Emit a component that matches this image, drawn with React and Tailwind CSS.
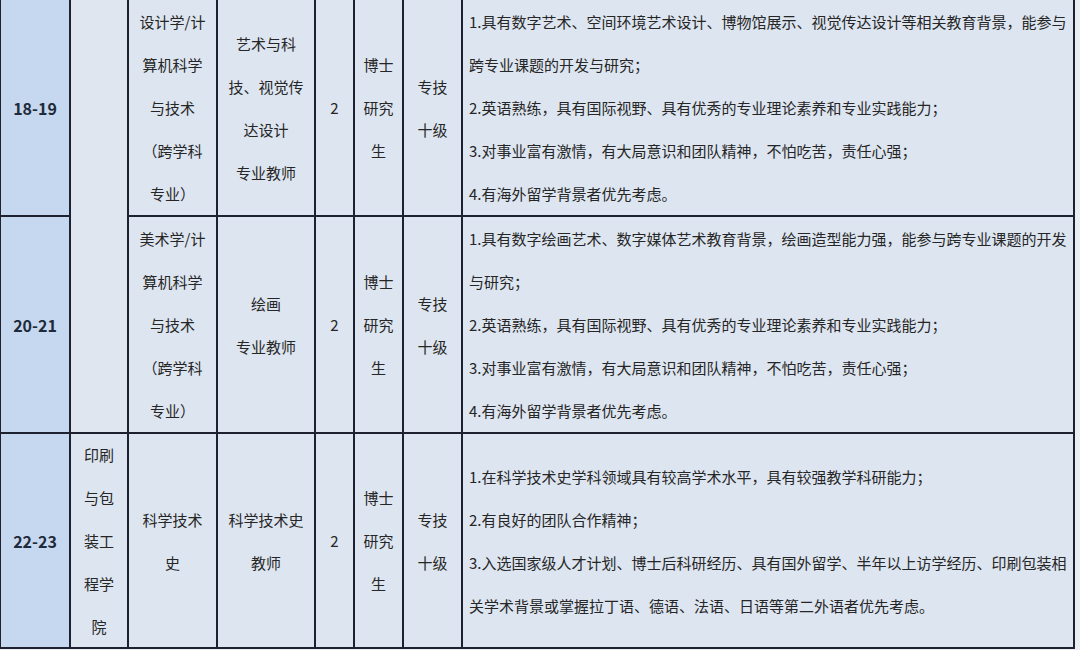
import React from "react";

const C = "flex flex-col items-center justify-center text-center bg-[#dde5f0] text-[#262626] text-[15px] leading-[43px] whitespace-nowrap";
const L = "flex flex-col items-start justify-center text-left bg-[#dde5f0] text-[#262626] text-[15px] leading-[43px] whitespace-nowrap pl-[6px]";
const N = "flex items-center justify-center bg-[#c6d8ef] text-[#1f2a3a] text-[16px] font-bold";

function Lines({ lines }) {
  return lines.map((t, i) => <div key={i}>{t}</div>);
}

export default function App() {
  return (
    <div className="w-[1080px] h-[650px] overflow-hidden bg-[#eaedf2] font-['Noto_Sans_CJK_SC','Microsoft_YaHei',sans-serif]">
      <div className="grid w-fit grid-cols-[68px_56px_87px_96px_37px_47px_57px_610px] grid-rows-[215px_215px_213px] gap-[2px] bg-[#1d2130] border-l border-r-2 border-b-2 border-[#1d2130]">
        {/* Row 1 */}
        <div className={N}>18-19</div>
        <div className={`${C} row-span-2 bg-[#dfe6f0]`}></div>
        <div className={C}>
          <Lines lines={["设计学/计", "算机科学", "与技术", "（跨学科", "专业）"]} />
        </div>
        <div className={C}>
          <Lines lines={["艺术与科", "技、视觉传", "达设计", "专业教师"]} />
        </div>
        <div className={C}>2</div>
        <div className={C}>
          <Lines lines={["博士", "研究", "生"]} />
        </div>
        <div className={C}>
          <Lines lines={["专技", "十级"]} />
        </div>
        <div className={L}>
          <Lines
            lines={[
              "1.具有数字艺术、空间环境艺术设计、博物馆展示、视觉传达设计等相关教育背景，能参与",
              "跨专业课题的开发与研究；",
              "2.英语熟练，具有国际视野、具有优秀的专业理论素养和专业实践能力；",
              "3.对事业富有激情，有大局意识和团队精神，不怕吃苦，责任心强；",
              "4.有海外留学背景者优先考虑。",
            ]}
          />
        </div>

        {/* Row 2 */}
        <div className={N}>20-21</div>
        <div className={C}>
          <Lines lines={["美术学/计", "算机科学", "与技术", "（跨学科", "专业）"]} />
        </div>
        <div className={C}>
          <Lines lines={["绘画", "专业教师"]} />
        </div>
        <div className={C}>2</div>
        <div className={C}>
          <Lines lines={["博士", "研究", "生"]} />
        </div>
        <div className={C}>
          <Lines lines={["专技", "十级"]} />
        </div>
        <div className={L}>
          <Lines
            lines={[
              "1.具有数字绘画艺术、数字媒体艺术教育背景，绘画造型能力强，能参与跨专业课题的开发",
              "与研究；",
              "2.英语熟练，具有国际视野、具有优秀的专业理论素养和专业实践能力；",
              "3.对事业富有激情，有大局意识和团队精神，不怕吃苦，责任心强；",
              "4.有海外留学背景者优先考虑。",
            ]}
          />
        </div>

        {/* Row 3 */}
        <div className={N}>22-23</div>
        <div className={C}>
          <Lines lines={["印刷", "与包", "装工", "程学", "院"]} />
        </div>
        <div className={C}>
          <Lines lines={["科学技术", "史"]} />
        </div>
        <div className={C}>
          <Lines lines={["科学技术史", "教师"]} />
        </div>
        <div className={C}>2</div>
        <div className={C}>
          <Lines lines={["博士", "研究", "生"]} />
        </div>
        <div className={C}>
          <Lines lines={["专技", "十级"]} />
        </div>
        <div className={L}>
          <Lines
            lines={[
              "1.在科学技术史学科领域具有较高学术水平，具有较强教学科研能力；",
              "2.有良好的团队合作精神；",
              "3.入选国家级人才计划、博士后科研经历、具有国外留学、半年以上访学经历、印刷包装相",
              "关学术背景或掌握拉丁语、德语、法语、日语等第二外语者优先考虑。",
            ]}
          />
        </div>
      </div>
    </div>
  );
}
